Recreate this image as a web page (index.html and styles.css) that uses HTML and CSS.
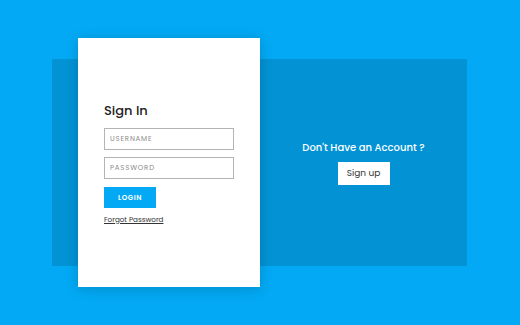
FILE: index.html
```html
<!DOCTYPE html>
<html>
<head>
<meta charset="utf-8">
<link rel="stylesheet" href="styles.css">
</head>
<body>
<div class="band">
    <div class="card">
        <h2 class="title">Sign In</h2>
        <input class="field" type="text" placeholder="USERNAME">
        <input class="field" type="password" placeholder="PASSWORD">
        <button class="login">LOGIN</button>
        <a class="forgot" href="#">Forgot Password</a>
    </div>
    <div class="side">
        <h3 class="ask">Don't Have an Account ?</h3>
        <button class="signup">Sign up</button>
    </div>
</div>
</body>
</html>
```

FILE: styles.css
```css
*{padding:0;margin:0;box-sizing:border-box;}
html,body{height:100%;}
body{
    background:#03a9f4;
    font-family:"Poppins",Inter,"Noto Sans",sans-serif;
    padding:59px 53px 0 52px;
}
.band{
    display:flex;
    height:207px;
    background:#0393d5;
}
.card{
    width:182px;
    margin:-21px 0 -21px 26px;
    background:#fff;
    box-shadow:0 2px 12px rgba(0,0,0,0.18);
    display:flex;
    flex-direction:column;
    justify-content:center;
    padding:2px 26px 0 26px;
}
.title{
    font-size:13px;
    font-weight:500;
    color:#222;
    margin-bottom:7px;
}
.field{
    display:block;
    width:130px;
    height:22px;
    border:1px solid #b4b4b4;
    padding:0 5px;
    font-family:inherit;
    font-size:7px;
    letter-spacing:0.8px;
    color:#555;
    margin-bottom:7px;
    outline:none;
}
.field::placeholder{color:#8a8a8a;}
.login{
    width:52px;
    height:21px;
    margin-top:1px;
    background:#03a9f4;
    color:#fff;
    border:none;
    font-family:inherit;
    font-size:7px;
    font-weight:600;
    letter-spacing:0.6px;
}
.forgot{
    margin-top:6px;
    font-size:7.2px;
    color:#333;
    text-decoration:underline;
    align-self:flex-start;
}
.side{
    flex:1;
    display:flex;
    flex-direction:column;
    align-items:center;
    justify-content:center;
}
.ask{
    color:#fff;
    font-size:10px;
    font-weight:500;
    margin-bottom:6px;
}
.signup{
    width:52px;
    height:23px;
    background:#fff;
    border:none;
    font-family:inherit;
    font-size:9px;
    color:#333;
}
```
